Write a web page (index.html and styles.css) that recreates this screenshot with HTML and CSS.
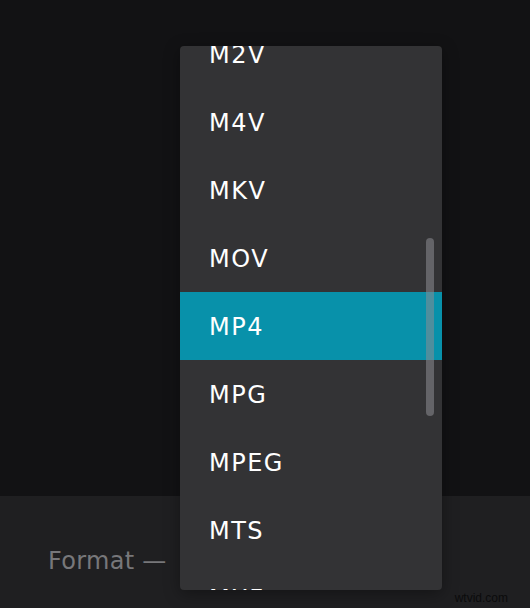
FILE: index.html
```html
<!DOCTYPE html>
<html>
<head>
<meta charset="utf-8">
<link rel="stylesheet" href="styles.css">
</head>
<body>
<div class="page">
  <div class="preview"></div>
  <div class="footer">
    <span class="label">Format —</span>
    <span class="watermark">wtvid.com</span>
  </div>
  <div class="menu">
    <div class="list">
      <div class="item">M2V</div>
      <div class="item">M4V</div>
      <div class="item">MKV</div>
      <div class="item">MOV</div>
      <div class="item selected">MP4</div>
      <div class="item">MPG</div>
      <div class="item">MPEG</div>
      <div class="item">MTS</div>
      <div class="item">MXF</div>
    </div>
    <div class="scrollbar"></div>
  </div>
</div>
</body>
</html>
```
FILE: styles.css
```css
html, body {
  margin: 0;
  padding: 0;
  background: #121214;
}
.page {
  position: relative;
  width: 530px;
  height: 608px;
  overflow: hidden;
  display: flex;
  flex-direction: column;
  font-family: "DejaVu Sans", sans-serif;
}
.preview {
  height: 496px;
  background: #121214;
}
.footer {
  flex: 1;
  background: #1f1f21;
  display: flex;
  align-items: flex-start;
  padding: 51px 0 0 48px;
  position: relative;
}
.label {
  color: #77777a;
  font-size: 24px;
  line-height: 28px;
  letter-spacing: 0.3px;
}
.watermark {
  position: absolute;
  right: 22px;
  bottom: 3px;
  font-family: "Liberation Sans", sans-serif;
  font-size: 12px;
  color: #0b0b0c;
}
.menu {
  position: absolute;
  left: 180px;
  top: 46px;
  width: 262px;
  height: 544px;
  background: #333335;
  border-radius: 4px;
  overflow: hidden;
  box-shadow: 0 4px 16px rgba(0,0,0,0.35);
}
.list {
  margin-top: -26px;
}
.item {
  box-sizing: border-box;
  height: 68px;
  padding-top: 3px;
  line-height: 65px;
  padding-left: 29px;
  color: #ffffff;
  font-size: 24px;
  letter-spacing: 1.5px;
}
.item.selected {
  background: #0891aa;
}
.scrollbar {
  position: absolute;
  left: 246px;
  top: 192px;
  width: 8px;
  height: 178px;
  border-radius: 4px;
  background: rgba(140,140,145,0.55);
}
```
